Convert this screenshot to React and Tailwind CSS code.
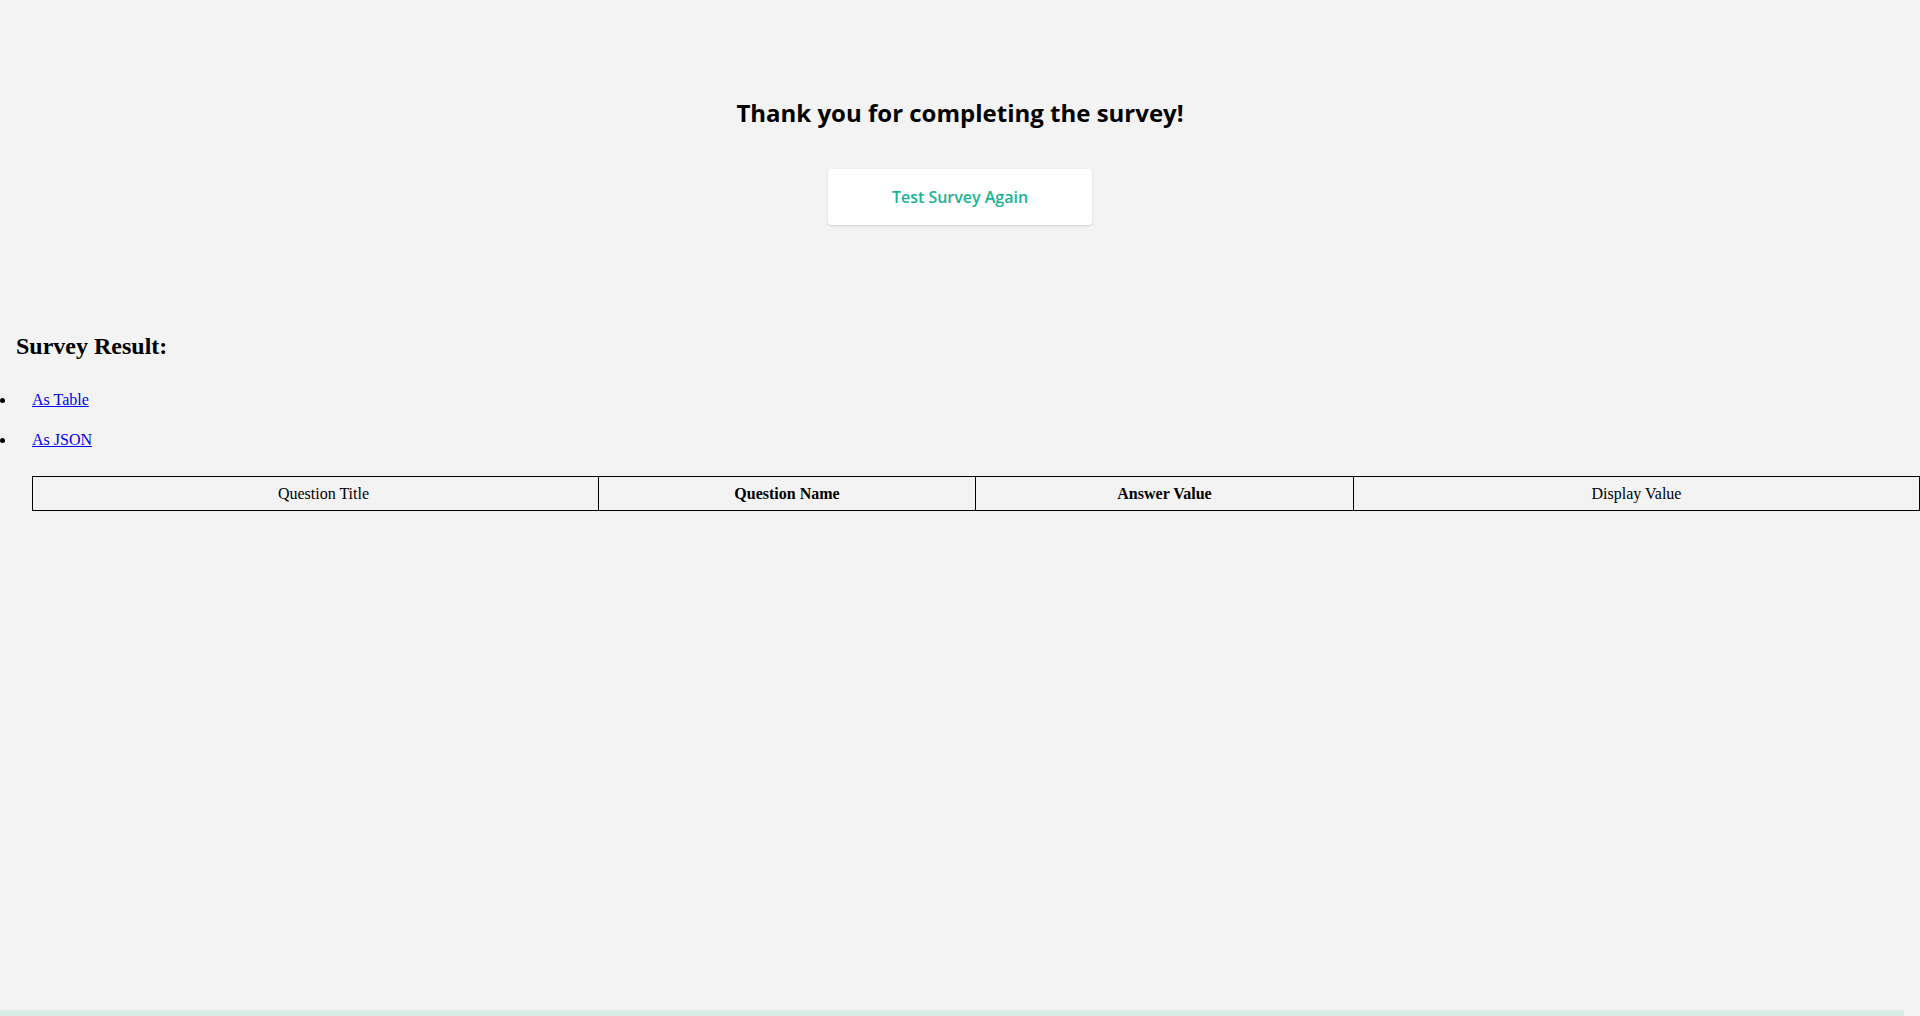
import React from 'react';

const columns = [
  { title: 'Question Title', bold: false, extra: 'pl-[16px]' },
  { title: 'Question Name', bold: true, extra: '' },
  { title: 'Answer Value', bold: true, extra: '' },
  { title: 'Display Value', bold: false, extra: '' },
];

function App() {
  return (
    <div className="flex h-[1016px] flex-col overflow-hidden bg-[#f3f3f3] text-black">
      {/* completed page */}
      <div className="flex flex-col items-center pt-[97px] font-['Open_Sans',sans-serif]">
        <h3 className="text-[24px] font-bold leading-[32px]">Thank you for completing the survey!</h3>
        <button className="mt-[40px] h-[56px] w-[264px] rounded-[4px] bg-white text-[16px] font-semibold text-[#19b394] shadow-[0_1px_2px_rgba(0,0,0,0.15)]">
          Test Survey Again
        </button>
      </div>

      {/* results */}
      <div className="mt-[107px] font-['Liberation_Serif',serif] text-[16px]">
        <h2 className="pl-[16px] text-[24px] font-bold leading-[28px]">Survey Result:</h2>
        <ul className="mt-[31px] flex flex-col gap-[22px]">
          <li className="flex h-[18px] items-center leading-[18px]">
            <span className="h-[5px] w-[5px] rounded-full bg-black" />
            <a href="#" className="ml-[27px] text-[#0000ee] underline">As Table</a>
          </li>
          <li className="flex h-[18px] items-center leading-[18px]">
            <span className="h-[5px] w-[5px] rounded-full bg-black" />
            <a href="#" className="ml-[27px] text-[#0000ee] underline">As JSON</a>
          </li>
        </ul>
        <div className="ml-[32px] mt-[27px] grid w-[1888px] grid-cols-[566px_377px_378px_566px] border-y border-l border-black">
          {columns.map((col) => (
            <div
              key={col.title}
              className={`flex h-[33px] items-center justify-center border-r border-black ${col.extra} ${col.bold ? 'font-bold' : ''}`}
            >
              {col.title}
            </div>
          ))}
        </div>
      </div>

      <div className="mt-auto h-[6px] w-[1904px] bg-[#d8ebe5]" />
    </div>
  );
}

export default App;
